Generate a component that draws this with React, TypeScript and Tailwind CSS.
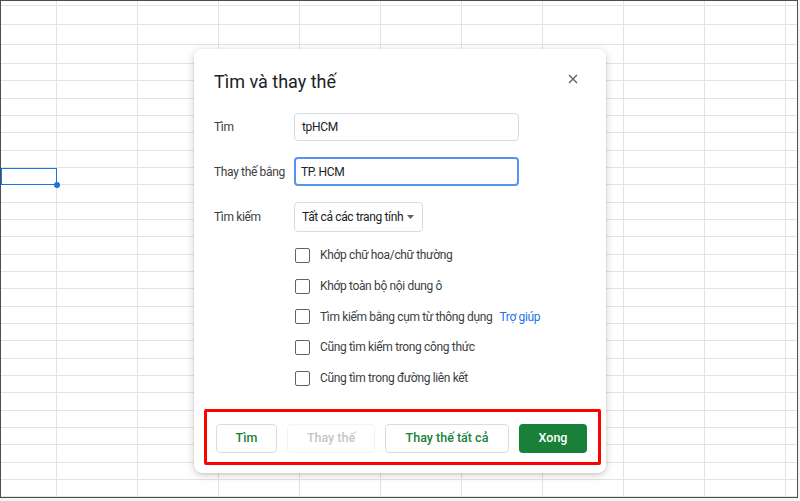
import React from 'react';

const rowHeights = [
  'h-[5px]', 'h-[19px]', 'h-[20px]', 'h-[19px]',
  ...Array(26).fill('h-[17.33px]'),
];

const colWidths = ['w-[56px]', ...Array(10).fill('w-[81px]')];

const options = [
  { label: 'Khớp chữ hoa/chữ thường' },
  { label: 'Khớp toàn bộ nội dung ô' },
  { label: 'Tìm kiếm bằng cụm từ thông dụng', help: 'Trợ giúp' },
  { label: 'Cũng tìm kiếm trong công thức' },
  { label: 'Cũng tìm trong đường liên kết' },
];

const Sheet: React.FC = () => (
  <div className="w-[798px] h-[498px] border-[1.5px] border-[#4d4d4d] overflow-hidden bg-white">
    {rowHeights.map((h, r) => (
      <div key={r} className={`flex ${h}`}>
        {colWidths.map((w, c) => (
          <div
            key={c}
            className={`${w} shrink-0 h-full border-r border-b border-[#e3e3e3] relative ${r === 10 && c === 0 ? 'z-10' : ''}`}
          >
            {r === 10 && c === 0 && (
              <>
                <div className="absolute top-0 left-0 right-[-1px] bottom-[-1px] border border-[#1a73e8]" />
                <div className="absolute right-[-4px] bottom-[-4px] w-[6px] h-[6px] rounded-full bg-[#1a73e8]" />
              </>
            )}
          </div>
        ))}
      </div>
    ))}
  </div>
);

const Checkbox: React.FC = () => (
  <div className="w-[15px] h-[15px] border-[1.5px] border-[#5f6368] rounded-[2px] shrink-0" />
);

const Dialog: React.FC = () => (
  <div className="absolute z-20 left-[194px] top-[49px] w-[412px] h-[424px] bg-white rounded-[8px] shadow-[0_2px_10px_rgba(0,0,0,0.18),0_1px_3px_rgba(0,0,0,0.1)] flex flex-col font-['Roboto',sans-serif]">
    {/* header */}
    <div className="flex items-start justify-between pl-[20px] pr-[28px] pt-[21px]">
      <h2 className="text-[18px] leading-[24px] text-[#202124] font-normal">Tìm và thay thế</h2>
      <svg width="10" height="10" viewBox="0 0 10 10" className="mt-[4px]">
        <path d="M1 1 L9 9 M9 1 L1 9" stroke="#5f6368" strokeWidth="1.4" />
      </svg>
    </div>

    {/* fields */}
    <div className="pl-[20px] mt-[19px] flex flex-col gap-[16px] text-[12px] tracking-[-0.35px]">
      <div className="flex items-center">
        <span className="w-[80px] text-[#3c4043]">Tìm</span>
        <div className="w-[225px] h-[28px] border border-[#dadce0] rounded-[4px] flex items-center pl-[7px] text-[#202124]">
          tpHCM
        </div>
      </div>
      <div className="flex items-center">
        <span className="w-[80px] text-[#3c4043]">Thay thế bằng</span>
        <div className="w-[225px] h-[29px] border-2 border-[#5592f2] rounded-[4px] flex items-center pl-[5px] text-[#202124]">
          TP. HCM
        </div>
      </div>
      <div className="flex items-center">
        <span className="w-[80px] text-[#3c4043]">Tìm kiếm</span>
        <div className="w-[129px] h-[30px] border border-[#dadce0] rounded-[4px] flex items-center justify-between pl-[7px] pr-[8px] text-[#202124] whitespace-nowrap">
          <span>Tất cả các trang tính</span>
          <svg width="7" height="4" viewBox="0 0 7 4">
            <path d="M0 0 L7 0 L3.5 4 Z" fill="#5f6368" />
          </svg>
        </div>
      </div>
    </div>

    {/* options */}
    <div className="pl-[101px] mt-[8px] flex flex-col text-[12px] tracking-[-0.35px]">
      {options.map((o) => (
        <div key={o.label} className="h-[30.7px] flex items-center gap-[10px] whitespace-nowrap">
          <Checkbox />
          <span className="text-[#3c4043]">{o.label}</span>
          {o.help && <span className="text-[#1a73e8] -ml-[3px]">{o.help}</span>}
        </div>
      ))}
    </div>

    {/* footer */}
    <div className="mt-auto mb-[8px] ml-[10px] w-[397px] h-[56px] border-[3px] border-[#ff0000] rounded-[2px] flex items-start gap-[10px] pl-[9px] pt-[12px]">
      <button className="w-[61px] h-[29px] border border-[#dadce0] rounded-[4px] text-[12.5px] font-medium text-[#188038]">
        Tìm
      </button>
      <button className="w-[88px] h-[29px] border border-[#f1f3f4] rounded-[4px] text-[12.5px] font-medium text-[#c4c7c5]">
        Thay thế
      </button>
      <button className="w-[124px] h-[29px] border border-[#dadce0] rounded-[4px] text-[12.5px] font-medium text-[#188038]">
        Thay thế tất cả
      </button>
      <button className="w-[68px] h-[29px] bg-[#188038] rounded-[4px] text-[12.5px] font-medium text-white">
        Xong
      </button>
    </div>
  </div>
);

export default function App() {
  return (
    <div className="relative w-[800px] h-[501px] bg-[#f4f4f4] overflow-hidden">
      <Sheet />
      <Dialog />
    </div>
  );
}
